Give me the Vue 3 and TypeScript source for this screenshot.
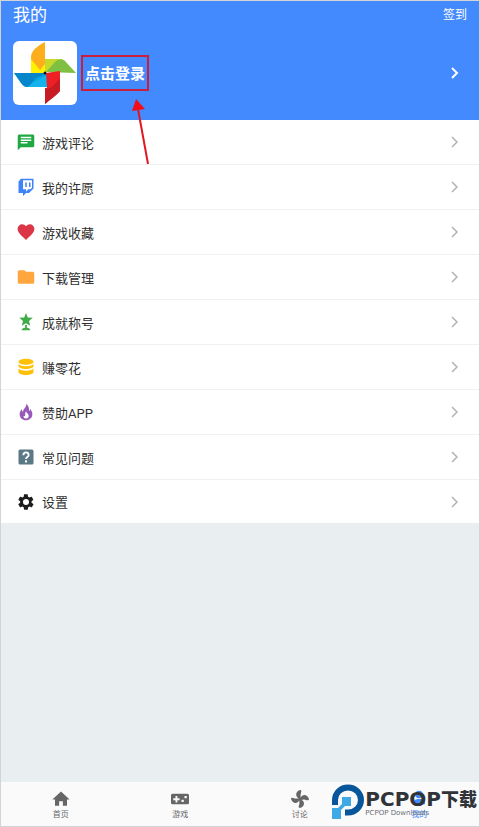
<script setup lang="ts">
interface MenuItem {
  label: string
  icon: string
  color: string
}

const menu: MenuItem[] = [
  { label: '游戏评论', icon: 'comment', color: '#1fa843' },
  { label: '我的许愿', icon: 'wish', color: '#3f83f8' },
  { label: '游戏收藏', icon: 'heart', color: '#dc3545' },
  { label: '下载管理', icon: 'folder', color: '#ffa63e' },
  { label: '成就称号', icon: 'trophy', color: '#40ab48' },
  { label: '赚零花', icon: 'coins', color: '#ffc107' },
  { label: '赞助APP', icon: 'flame', color: '#965bb8' },
  { label: '常见问题', icon: 'question', color: '#5b7886' },
  { label: '设置', icon: 'gear', color: '#1c1c1c' },
]

const paths: Record<string, string> = {
  comment: 'M21 2H3a2 2 0 0 0-2 2v19l4-4h16a2 2 0 0 0 2-2V4a2 2 0 0 0-2-2zM5 5h14v2H5zm0 3.500h14v2H5zM5 12h9v2H5z',
  wish: 'M5 1h17v13l-6 6h-4l-4 4v-4H2V5zM8 3v12h4v3l3-3h3l2-2V3zM11 6h2v6h-2zM16 6h2v6h-2z',
  heart: 'M12 22.500l-1.600-1.400C4.500 15.800.800 12.300.800 7.800A6 6 0 0 1 6.800 1.800c2 0 4 1 5.200 2.600 1.200-1.600 3.200-2.600 5.200-2.600a6 6 0 0 1 6 6c0 4.500-3.700 8-9.600 13.300z',
  folder: 'M10 3H3a2 2 0 0 0-2 2v14a2 2 0 0 0 2 2h18a2 2 0 0 0 2-2V7a2 2 0 0 0-2-2h-9z',
  trophy: 'M12 0l2.400 6 6.600.3-5 4.300 1.600 6.400-5.600-3.500L6.400 17 8 10.600 3 6.300 9.600 6zM10.800 16h2.400v3.500c2.700.2 4.200 1.200 4.700 3.500H6.100c.5-2.300 2-3.300 4.700-3.500z',
  coins: 'M12 1c5.500 0 10 1.800 10 4s-4.500 4-10 4S2 7.200 2 5s4.500-4 10-4zM2 8c2 2 5.500 3 10 3s8-1 10-3v2.500c0 2.200-4.500 4-10 4s-10-1.800-10-4zM2 14c2 2 5.500 3 10 3s8-1 10-3v4.500c0 2.200-4.500 4-10 4s-10-1.800-10-4z',
  flame: 'M12 1c1.500 4-3.500 6.500-4 10.500C6.800 11 6.500 9.500 6.800 8 4.500 10 3.500 12.500 3.500 15c0 5 3.800 8 8.500 8s8.500-3.300 8.500-8c0-3.500-1.500-5.500-3-7.500 0 1.500-.5 2.500-1.500 3.200C16.500 7 15.500 3 12 1zM12.500 11c-.5 2.500 3 3 3 6a3.500 3.500 0 0 1-7 .3c1 .7 2.300.5 2.500-.5.4-1.800-1.200-3.300 1.500-5.800z',
  gear: 'M19.400 13l.1-1-.1-1 2.200-1.700c.2-.1.200-.4.1-.6l-2.100-3.600c-.1-.2-.4-.3-.6-.2l-2.600 1-1.700-1-.4-2.700c0-.3-.2-.4-.5-.4H9.800c-.3 0-.5.200-.5.400l-.4 2.700-1.700 1-2.600-1c-.2-.1-.5 0-.6.200L1.900 8.700c-.1.200-.1.500.1.600L4.200 11l-.1 1 .1 1L2 14.700c-.2.100-.2.400-.1.600L4 18.900c.1.200.4.300.6.200l2.600-1 1.700 1 .4 2.700c0 .3.200.4.500.4H14c.3 0 .5-.2.500-.4l.4-2.700 1.700-1 2.600 1c.2.100.5 0 .6-.2l2.100-3.600c.1-.2.1-.5-.1-.6zM12 16a4 4 0 1 1 0-8 4 4 0 0 1 0 8z',
}

interface Tab {
  label: string
  viewBox: string
  path: string
  active?: boolean
}

const tabs: Tab[] = [
  { label: '首页', viewBox: '0 0 24 24', path: 'M9.500 21v-6h5v6H20v-8.500h3.500L12 2 .5 12.500H4V21z' },
  {
    label: '游戏',
    viewBox: '0 0 24 24',
    path: 'M2 5h20a2 2 0 0 1 2 2v10a2 2 0 0 1-2 2H2a2 2 0 0 1-2-2V7a2 2 0 0 1 2-2zM6 8v3H3v2.500h3v3h2.500v-3h3V11h-3V8zM14 13h3v3h-3zM18 8h3v3h-3z',
  },
  {
    label: '讨论',
    viewBox: '0 0 24 24',
    path: 'M10.500 11C6.500 10 4.500 2.500 12 0q2.500 0 1.500 3-1.500 3.500-.3 7.200C14.200 6 21.500 4.500 24 12q0 2.500-3 1.500-3.500-1.500-7-.3C18 14.200 19.500 21.500 12 24q-2.500 0-1.500-3 1.500-3.500.3-7.200C9.800 18 2.500 19.500 0 12q0-2.500 3-1.500 3.800 1.600 7.500.5z',
  },
  {
    label: '我的',
    viewBox: '0 0 24 24',
    path: 'M12 1a5 5 0 0 1 5 5 5 5 0 0 1-5 5 5 5 0 0 1-5-5 5 5 0 0 1 5-5zM4 19v-2c0-3 4-5 8-5s8 2 8 5v2z',
    active: true,
  },
]
</script>

<template>
  <div class="app">
    <header class="hero">
      <div class="top">
        <h1>我的</h1>
        <button type="button" class="sign">签到</button>
      </div>
      <div class="profile">
        <span class="avatar">
          <svg viewBox="0 0 64 64" aria-hidden="true">
            <path fill="#c6d92d" d="M30 18h20L40 31h-8z" />
            <path fill="#7fbf42" d="M33 31l10-11c3-2 7-2 9 0l11 12z" />
            <path fill="#fff100" d="M18 16l9 12 5-5v9l-14 3z" />
            <path fill="#fdae1c" d="M32 1C24 5 18 10 18 16v2l9 11 5-6z" />
            <path fill="#06a4e0" d="M1 32h33v14H13z" />
            <path fill="#15b3ec" d="M12 46l20-11h2v11z" />
            <path fill="#0586cb" d="M1 32h29c1 4-6 3-9 7s-5 7-8 7C9 45 6 39 1 32z" />
            <path fill="#ee2026" d="M33 32l14-2v20L32 63V47h2z" />
            <path fill="#c81c24" d="M32 63V49c1-3 4-1 7-3l8-9v13C43 55 38 58 32 63z" />
            <circle cx="32" cy="32" r="1.500" fill="#111" />
          </svg>
        </span>
        <button type="button" class="login">
          点击登录
          <svg class="arrow" viewBox="0 0 18 66" aria-hidden="true">
            <path d="M16 65L6 10" stroke="#e3171f" stroke-width="2" fill="none" />
            <path d="M4 0L0 12l13-2z" fill="#f20d17" />
          </svg>
        </button>
        <svg class="chevron light" viewBox="0 0 12 12" aria-hidden="true"><path d="M3 1l5 5-5 5" /></svg>
      </div>
    </header>

    <nav class="menu">
      <a v-for="item in menu" :key="item.icon" href="#">
        <svg class="icon" viewBox="0 0 24 24" aria-hidden="true">
          <template v-if="item.icon === 'question'">
            <rect x="2" y="2" width="20" height="20" rx="2" :fill="item.color" />
            <path d="M8.500 9.500c0-5 7-5 7 0 0 2.500-3.500 2.500-3.500 5" fill="none" stroke="#fff" stroke-width="2.500" />
            <path d="M10.600 16.500h2.800v2.800h-2.800z" fill="#fff" />
          </template>
          <path v-else :d="paths[item.icon]" :fill="item.color" fill-rule="evenodd" />
        </svg>
        <span>{{ item.label }}</span>
        <svg class="chevron" viewBox="0 0 12 12" aria-hidden="true"><path d="M3 1l5 5-5 5" /></svg>
      </a>
    </nav>

    <nav class="tabs">
      <a v-for="tab in tabs" :key="tab.label" href="#" :class="{ active: tab.active }">
        <svg :viewBox="tab.viewBox" aria-hidden="true">
          <path fill="currentColor" fill-rule="evenodd" :d="tab.path" />
        </svg>
        <span>{{ tab.label }}</span>
      </a>
    </nav>

    <div class="watermark">
      <svg viewBox="0 0 32 36" aria-hidden="true">
        <path d="M3 21v-5a13 12.500 0 1 1 13 12.500h-3" fill="none" stroke="#07569c" stroke-width="6" />
        <path d="M10 13h9v9h-6l-4 4v9H0V24h6l4-4z" fill="#3ea9e4" />
      </svg>
      <div class="words">
        <strong><span class="latin">PCPOP</span>下载</strong>
        <small>PCPOP Downloads</small>
      </div>
    </div>
  </div>
</template>

<style>
body {
  margin: 0;
}
</style>

<style scoped>
.app {
  position: relative;
  box-sizing: border-box;
  min-height: 100vh;
  display: flex;
  flex-direction: column;
  border: 1px solid #d2d4d6;
  background: #e9eef1;
  color: #303030;
  font-family: Roboto, 'Noto Sans CJK SC', sans-serif;
}
a {
  color: inherit;
  text-decoration: none;
}
button {
  padding: 0;
  border: 0;
  background: none;
  color: inherit;
  font: inherit;
}
.hero {
  padding: 0 12px 15px;
  background: #448aff;
  color: #fff;
}
.top {
  display: flex;
  justify-content: space-between;
  align-items: center;
  height: 28px;
}
h1 {
  margin: 0;
  font-size: 17px;
  font-weight: 400;
  line-height: 28px;
}
.sign {
  font-size: 12px;
  line-height: 28px;
}
.profile {
  display: flex;
  align-items: center;
  padding-top: 12px;
}
.avatar {
  width: 64px;
  height: 64px;
  border-radius: 6px;
  background: #fff;
  overflow: hidden;
}
.avatar svg {
  display: block;
}
.login {
  position: relative;
  box-sizing: border-box;
  height: 36px;
  margin-left: 4px;
  padding: 2px 2px 0;
  border: 2px solid #c91f3c;
  font-size: 15px;
  font-weight: 700;
  line-height: 30px;
}
.arrow {
  position: absolute;
  left: 49px;
  top: 42px;
  width: 18px;
  height: 66px;
}
.chevron {
  width: 12px;
  height: 12px;
  margin-left: auto;
  fill: none;
  stroke: #b3b3b3;
  stroke-width: 1.5;
}
.chevron.light {
  margin-right: 6px;
  stroke: #fff;
  stroke-width: 2;
}
.menu {
  background: #fff;
}
.menu a {
  display: flex;
  align-items: center;
  gap: 7px;
  box-sizing: border-box;
  height: 45px;
  padding: 0 18px 0 16px;
  border-bottom: 1px solid #f0f1f1;
  font-size: 13px;
}
.menu a:last-child {
  height: 43px;
  border-bottom: 0;
}
.icon {
  width: 18px;
  height: 18px;
}
.tabs {
  display: grid;
  grid-template-columns: repeat(4, 1fr);
  margin-top: auto;
  background: #fafafa;
  color: #666;
}
.tabs a {
  display: flex;
  flex-direction: column;
  align-items: center;
  padding: 8px 0 4px;
  font-size: 8px;
  line-height: 14px;
}
.tabs svg {
  width: 18px;
  height: 18px;
}
.tabs .active {
  color: #448aff;
}
.watermark {
  position: absolute;
  right: 2px;
  bottom: 6px;
  display: flex;
  align-items: center;
  gap: 1px;
  color: #303438;
}
.watermark svg {
  width: 32px;
  height: 36px;
}
.words {
  display: flex;
  flex-direction: column;
}
.words strong {
  font-family: 'Noto Sans CJK SC', sans-serif;
  font-size: 18px;
  font-weight: 900;
  line-height: 20px;
}
.words .latin {
  font-family: 'DejaVu Sans', sans-serif;
  font-size: 20px;
}
.words small {
  color: #6b6f73;
  font-family: 'DejaVu Sans', sans-serif;
  font-size: 7px;
  line-height: 8px;
}
</style>
